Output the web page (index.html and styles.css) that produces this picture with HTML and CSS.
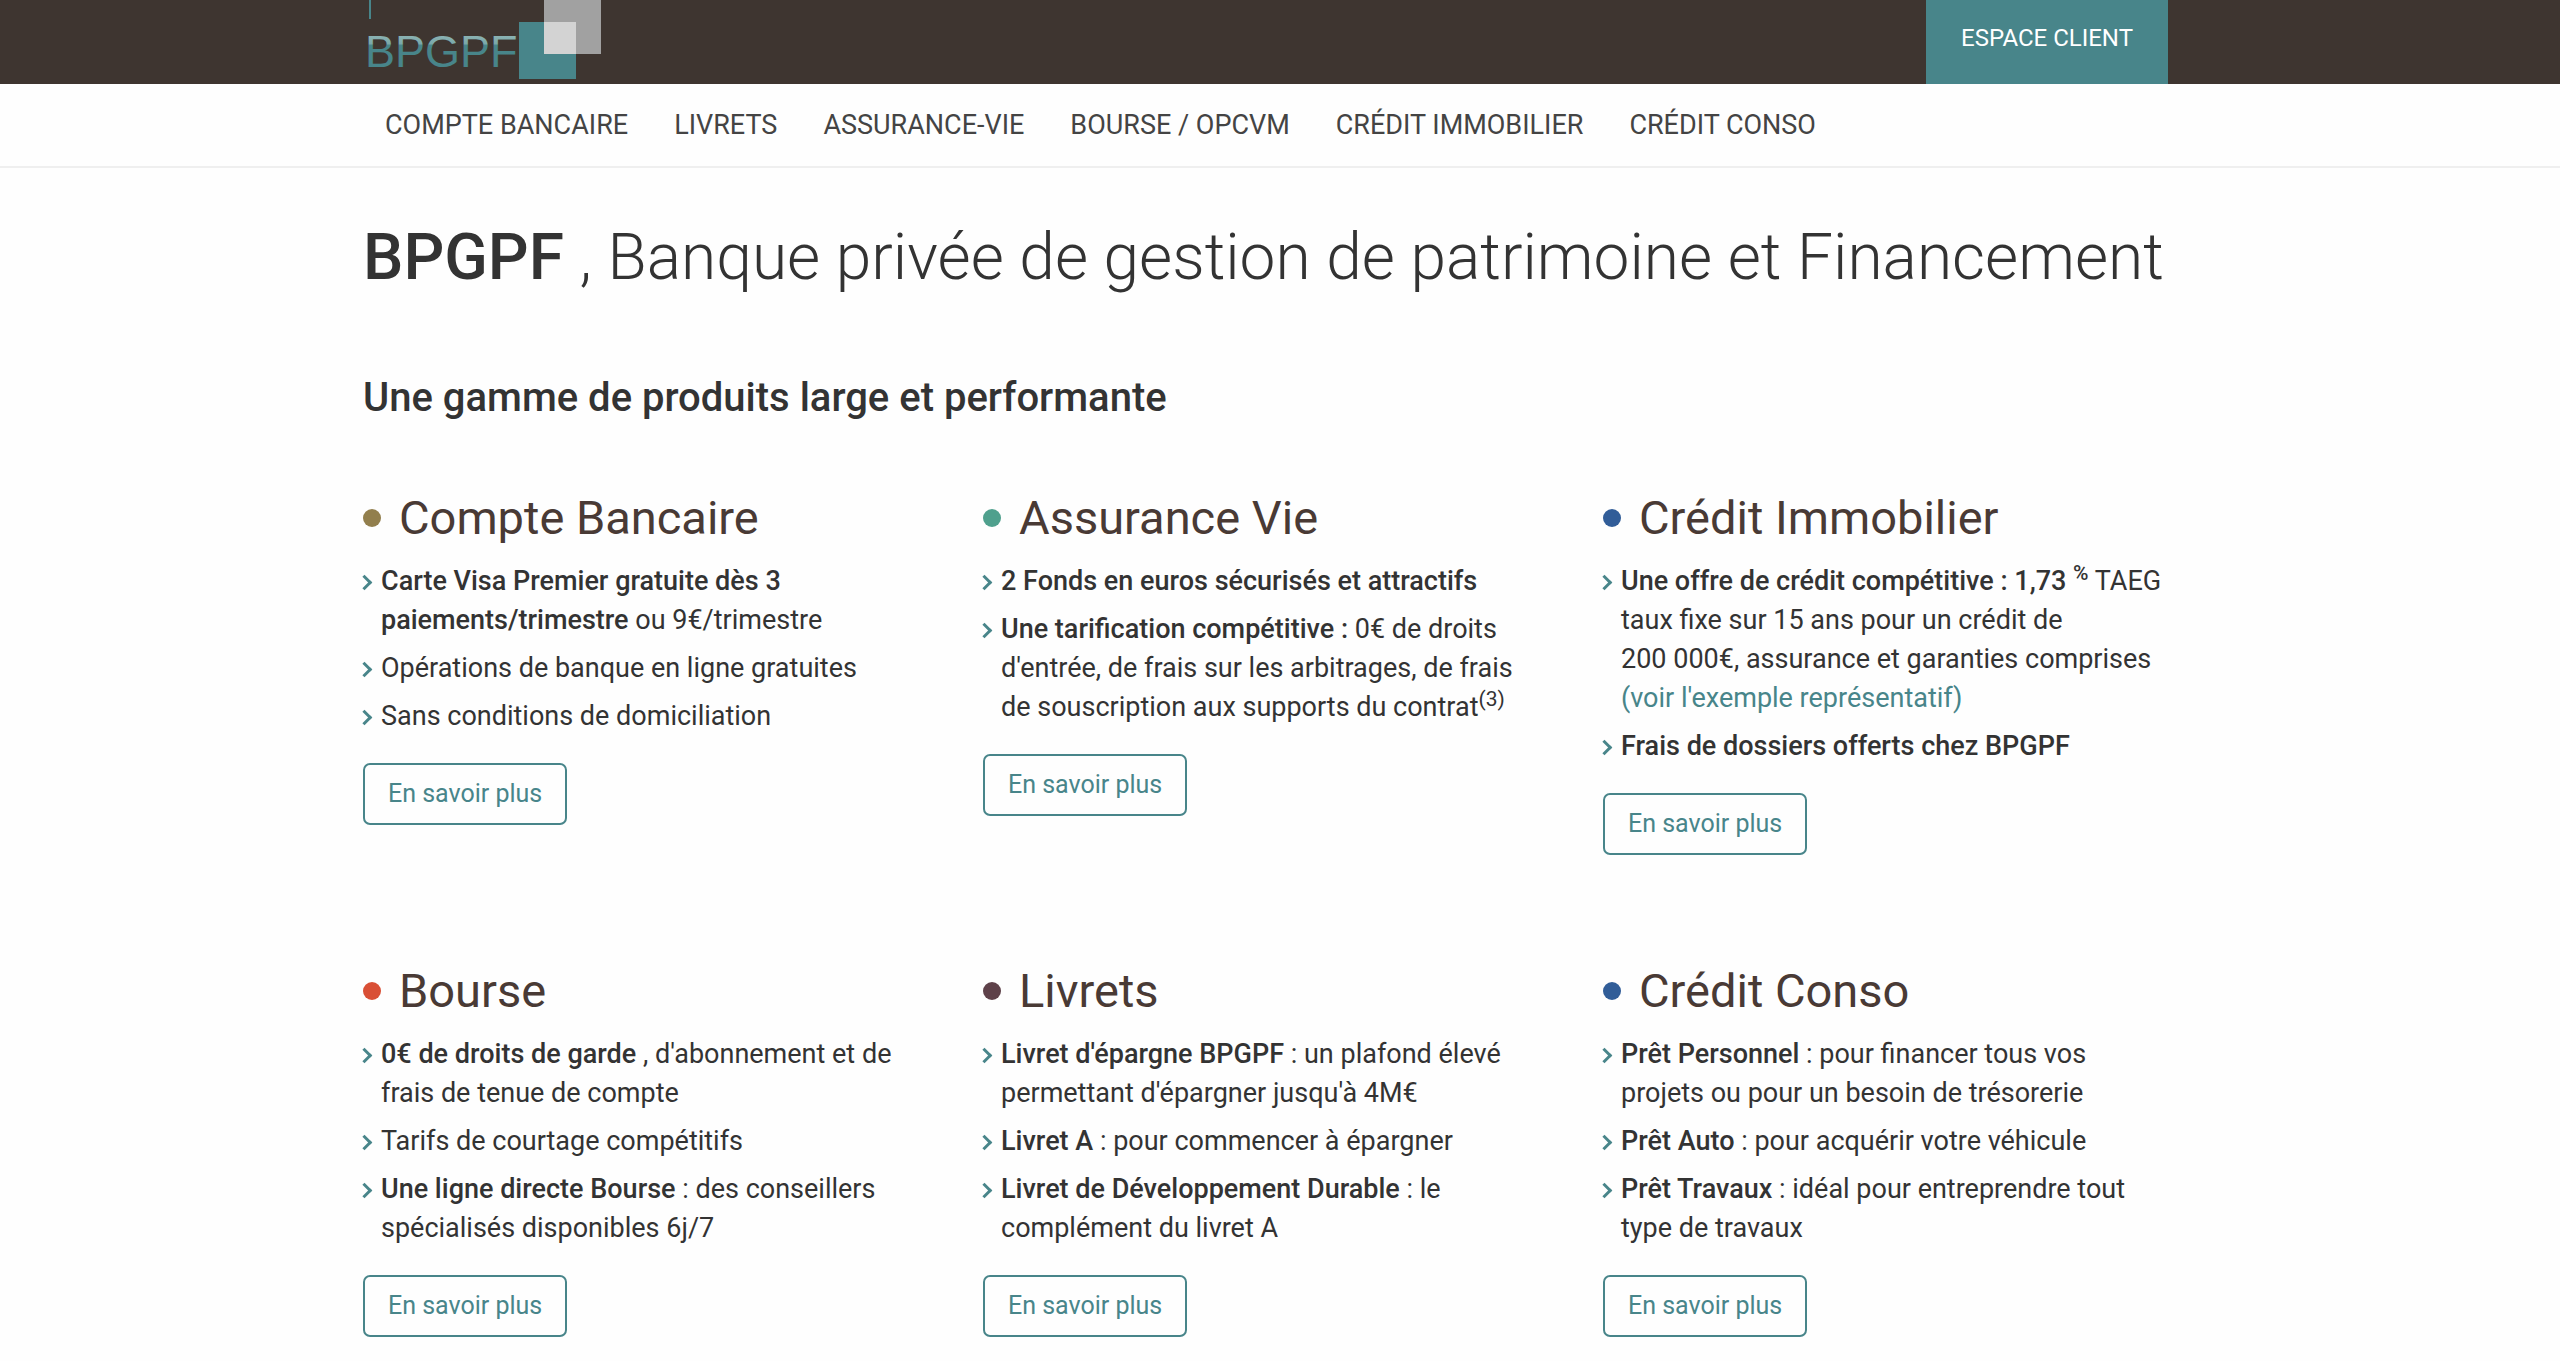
FILE: index.html
```html
<!DOCTYPE html>
<html lang="fr">
<head>
<meta charset="utf-8">
<meta name="viewport" content="width=device-width, initial-scale=1">
<title>BPGPF</title>
<link rel="stylesheet" href="styles.css">
</head>
<body>
<header class="topbar">
  <div class="container topbar-inner">
    <a class="logo" href="#" aria-label="BPGPF">
      <svg width="240" height="84" viewBox="0 0 240 84">
        <defs>
          <linearGradient id="sheen" gradientUnits="userSpaceOnUse" x1="70" y1="34" x2="70" y2="68">
            <stop offset="0" stop-color="#8fb5b5"/>
            <stop offset=".28" stop-color="#7aa8a9"/>
            <stop offset=".34" stop-color="#48858a"/>
            <stop offset="1" stop-color="#48858a"/>
          </linearGradient>
        </defs>
        <rect x="6" y="0" width="2" height="19" fill="#48858a"/>
        <text class="logo-text" x="2" y="67" fill="url(#sheen)">BPGPF</text>
        <rect x="156" y="22" width="57" height="57" fill="#48858a"/>
        <rect x="181" y="0" width="57" height="54" fill="#a1a1a1"/>
        <rect x="181" y="22" width="32" height="32" fill="#d3d3d3"/>
      </svg>
    </a>
    <a class="client-link" href="#">ESPACE CLIENT</a>
  </div>
</header>
<nav class="mainnav">
  <div class="container">
    <ul class="nav-list">
      <li><a href="#">COMPTE BANCAIRE</a></li>
      <li><a href="#">LIVRETS</a></li>
      <li><a href="#">ASSURANCE-VIE</a></li>
      <li><a href="#">BOURSE / OPCVM</a></li>
      <li><a href="#">CRÉDIT IMMOBILIER</a></li>
      <li><a href="#">CRÉDIT CONSO</a></li>
    </ul>
  </div>
</nav>
<main class="container">
  <h1 class="title"><strong>BPGPF</strong> , Banque privée de gestion de patrimoine et Financement</h1>
  <h2 class="subtitle">Une gamme de produits large et performante</h2>
  <div class="products">
    <section class="product">
      <h3 class="product-title gold">Compte Bancaire</h3>
      <ul class="features">
        <li><strong>Carte Visa Premier gratuite dès 3 paiements/trimestre</strong> ou 9€/trimestre</li>
        <li>Opérations de banque en ligne gratuites</li>
        <li>Sans conditions de domiciliation</li>
      </ul>
      <a class="more" href="#">En savoir plus</a>
    </section>
    <section class="product">
      <h3 class="product-title green">Assurance Vie</h3>
      <ul class="features">
        <li><strong>2 Fonds en euros sécurisés et attractifs</strong></li>
        <li><strong>Une tarification compétitive :</strong> 0€ de droits d'entrée, de frais sur les arbitrages, de frais de souscription aux supports du contrat<sup>(3)</sup></li>
      </ul>
      <a class="more" href="#">En savoir plus</a>
    </section>
    <section class="product">
      <h3 class="product-title blue">Crédit Immobilier</h3>
      <ul class="features">
        <li><strong>Une offre de crédit compétitive : 1,73 <sup>%</sup></strong> TAEG taux fixe sur 15 ans pour un crédit de 200&nbsp;000€, assurance et garanties comprises <a href="#">(voir&nbsp;l'exemple représentatif)</a></li>
        <li><strong>Frais de dossiers offerts chez BPGPF</strong></li>
      </ul>
      <a class="more" href="#">En savoir plus</a>
    </section>
    <section class="product">
      <h3 class="product-title red">Bourse</h3>
      <ul class="features">
        <li><strong>0€ de droits de garde</strong> , d'abonnement et de frais de tenue de compte</li>
        <li>Tarifs de courtage compétitifs</li>
        <li><strong>Une ligne directe Bourse</strong> : des conseillers spécialisés disponibles 6j/7</li>
      </ul>
      <a class="more" href="#">En savoir plus</a>
    </section>
    <section class="product">
      <h3 class="product-title plum">Livrets</h3>
      <ul class="features">
        <li><strong>Livret d'épargne BPGPF</strong> : un plafond élevé permettant d'épargner jusqu'à 4M€</li>
        <li><strong>Livret A</strong> : pour commencer à épargner</li>
        <li><strong>Livret de Développement Durable</strong> : le complément du livret A</li>
      </ul>
      <a class="more" href="#">En savoir plus</a>
    </section>
    <section class="product">
      <h3 class="product-title blue">Crédit Conso</h3>
      <ul class="features">
        <li><strong>Prêt Personnel</strong> : pour financer tous vos projets ou pour un besoin de trésorerie</li>
        <li><strong>Prêt Auto</strong> : pour acquérir votre véhicule</li>
        <li><strong>Prêt Travaux</strong> : idéal pour entreprendre tout type de travaux</li>
      </ul>
      <a class="more" href="#">En savoir plus</a>
    </section>
  </div>
</main>
</body>
</html>
```

FILE: styles.css
```css
*, *::before { box-sizing: border-box; }

body {
  margin: 0;
  background: #fefefe;
  color: #333;
  font-family: Roboto, "Liberation Sans", sans-serif;
  font-size: 27px;
  line-height: 39px;
}

a { color: #48858a; text-decoration: none; }
ul { margin: 0; padding: 0; list-style: none; }
h1, h2, h3 { margin: 0; }
strong { font-weight: 500; }

.container {
  max-width: 1885px;
  padding: 0 40px;
  margin-left: max(0px, calc((100% - 1884px) / 2 - 15px));
}

.topbar { background: #3e3530; }
.topbar-inner { display: flex; justify-content: space-between; }
.logo svg { display: block; }
.logo-text { font-family: "Liberation Sans", sans-serif; font-size: 45px; }
.client-link {
  width: 242px;
  padding-top: 19px;
  background: #48858a;
  color: #fff;
  font-size: 24px;
  text-align: center;
}

.mainnav { border-bottom: 2px solid #efefef; }
.nav-list { display: flex; flex-wrap: wrap; gap: 0 46px; padding: 22px 22px 21px; }
.nav-list a { color: #444; }

.title { padding-top: 50px; font-size: 64px; font-weight: 300; line-height: 80px; }
.subtitle { padding-top: 70px; font-size: 40px; font-weight: 500; line-height: 60px; }

.products {
  display: grid;
  grid-template-columns: repeat(auto-fit, minmax(500px, 1fr));
  gap: 106px 55px;
  padding: 60px 0 22px;
}
.product { display: flex; flex-direction: column; align-items: flex-start; }
.product-title {
  display: flex;
  align-items: center;
  gap: 18px;
  margin-bottom: 14px;
  color: #493a35;
  font-size: 47px;
  font-weight: 400;
  line-height: 60px;
}
.product-title::before {
  content: "";
  width: 18px;
  height: 18px;
  border-radius: 50%;
  background: currentColor;
}
.gold::before { background: #927f4d; }
.green::before { background: #4fa08d; }
.blue::before { background: #315d98; }
.red::before { background: #d94f35; }
.plum::before { background: #5e4149; }

.features { display: grid; gap: 9px; margin-bottom: 27px; }
.features li { padding-left: 18px; position: relative; }
.features li::before {
  content: "";
  position: absolute;
  left: -4px;
  top: 15px;
  width: 11px;
  height: 11px;
  border: solid #48858a;
  border-width: 3px 3px 0 0;
  transform: rotate(45deg);
}
.features sup { font-size: 21px; line-height: 0; }

.more {
  padding: 10px 23px;
  border: 2px solid #48858a;
  border-radius: 7px;
  font-size: 25px;
  line-height: 38px;
}
```
